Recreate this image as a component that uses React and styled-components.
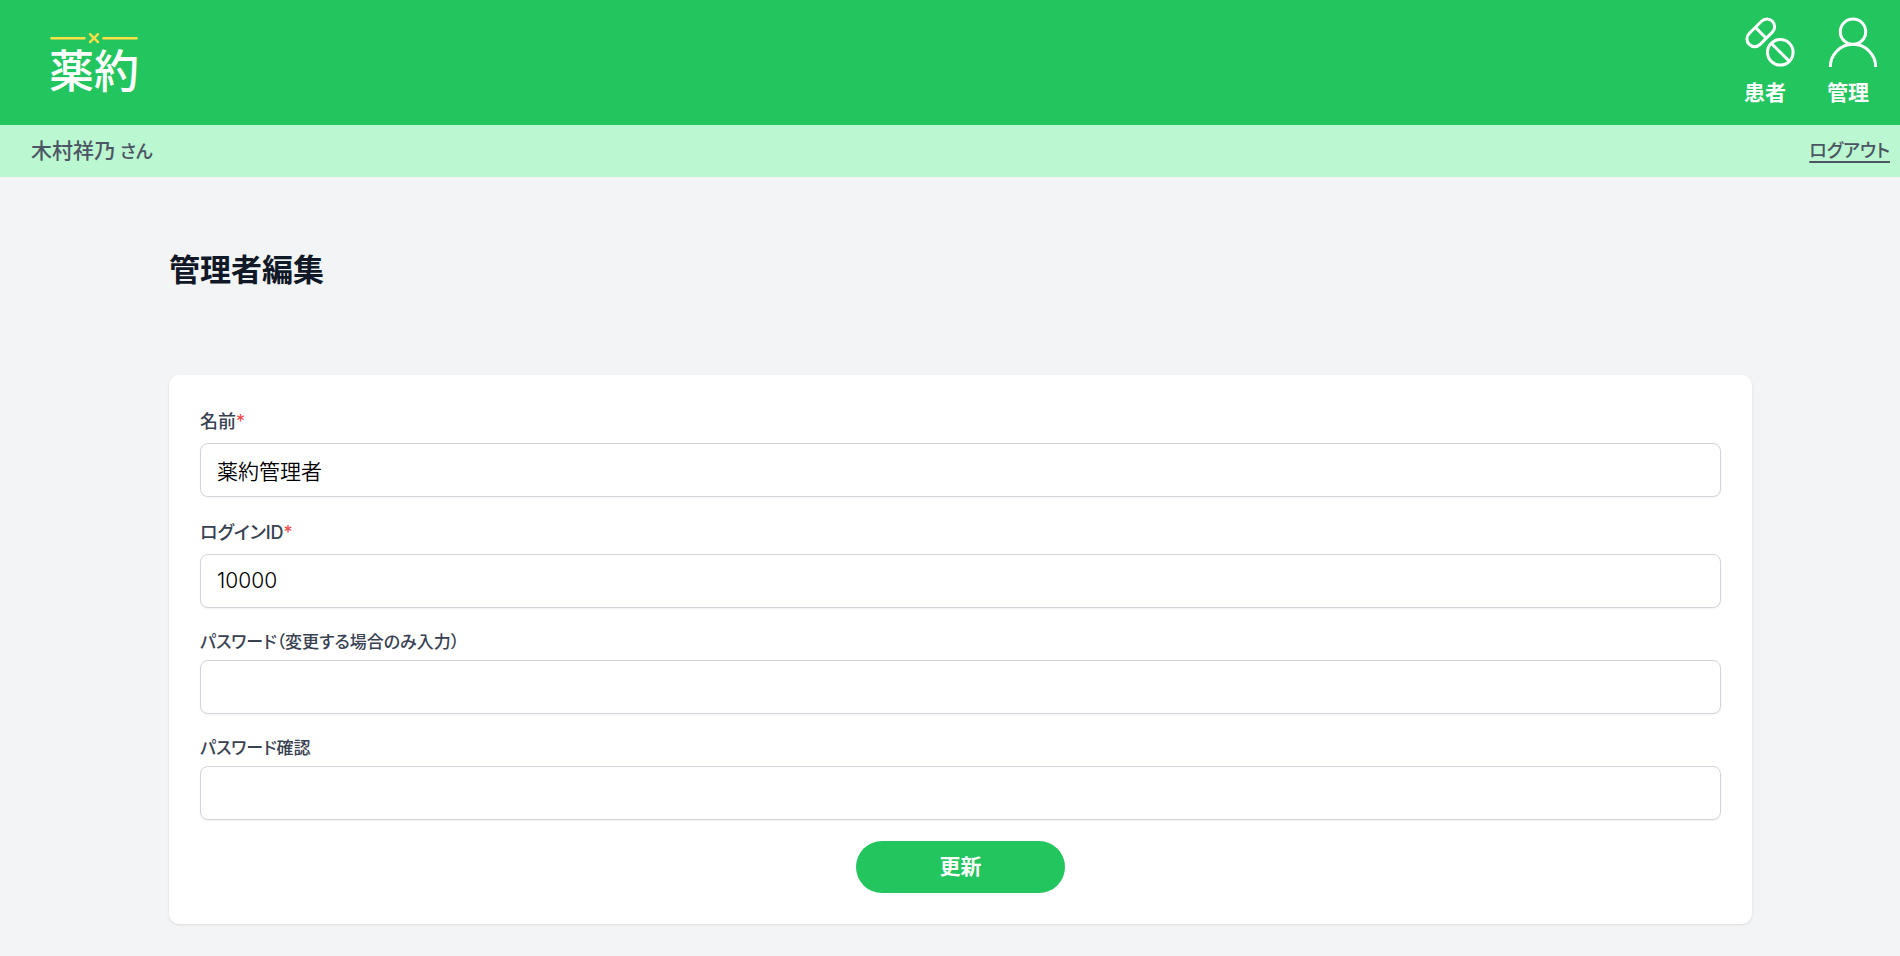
import React from "react";
import styled, { createGlobalStyle } from "styled-components";

const GlobalStyle = createGlobalStyle`
  *, *::before, *::after { box-sizing: border-box; }
  body {
    margin: 0;
    min-height: 100vh;
    background: #f3f4f6;
    font-family: Inter, "Noto Sans CJK JP", sans-serif;
    font-feature-settings: "palt";
  }
`;

const Header = styled.header`
  display: flex;
  justify-content: space-between;
  align-items: flex-start;
  height: 125px;
  padding: 0 21px 0 42px;
  background: #22c55e;
`;

const Logo = styled.a`
  display: flex;
  flex-direction: column;
  align-items: center;
  width: 104px;
  padding-top: 32px;
  color: #fff;
  text-decoration: none;
`;

const LogoText = styled.span`
  font-family: "Noto Sans CJK JP", sans-serif;
  font-feature-settings: normal;
  font-size: 45px;
  font-weight: 500;
  line-height: 50px;
`;

const Nav = styled.nav`
  display: flex;
  gap: 31px;
  padding-top: 16px;
`;

const NavLink = styled.a`
  display: flex;
  flex-direction: column;
  width: 52px;
  color: #fff;
  font-size: 21px;
  font-weight: 700;
  line-height: 30px;
  text-decoration: none;
  white-space: nowrap;
`;

const NavIcon = styled.svg`
  width: 52px;
  height: 52px;
  margin-bottom: 10px;
  fill: none;
  stroke: currentColor;
  stroke-width: 3;
`;

const UserBar = styled.div`
  display: flex;
  justify-content: space-between;
  align-items: center;
  height: 52px;
  padding: 0 10px 0 31px;
  background: #bbf7d0;
  color: #4b5563;
  font-size: 21px;
  font-weight: 500;
  line-height: 32px;
`;

const Honorific = styled.span`
  font-size: 18px;
`;

const Logout = styled.a`
  color: inherit;
  font-size: 18px;
  text-decoration: underline;
  text-decoration-thickness: 2px;
  text-underline-offset: 4px;
`;

const Main = styled.main`
  padding: 72px 148px 32px 169px;
`;

const Title = styled.h1`
  margin: 0 0 84px;
  color: #111827;
  font-size: 31px;
  font-weight: 600;
  line-height: 42px;
`;

const Card = styled.form`
  display: flex;
  flex-direction: column;
  gap: 21px;
  padding: 32px 31px 31px;
  border-radius: 10px;
  background: #fff;
  box-shadow: 0 1px 3px rgba(0, 0, 0, 0.1);
`;

const Field = styled.div`
  display: flex;
  flex-direction: column;
  gap: 5px;
`;

const Label = styled.label`
  color: #374151;
  font-size: ${(p) => (p.$required ? "18px" : "17px")};
  font-weight: 500;
  line-height: ${(p) => (p.$required ? "30px" : "26px")};
  padding-bottom: ${(p) => (p.$required ? "1px" : "0")};
`;

const Mark = styled.span`
  color: #ef4444;
  font-weight: 400;
`;

const Input = styled.input`
  width: 100%;
  height: 54px;
  padding: 0 16px 1px;
  border: 1px solid #d1d5db;
  border-radius: 8px;
  background: #fff;
  box-shadow: 0 1px 2px rgba(0, 0, 0, 0.05);
  color: #000;
  font-family: inherit;
  font-size: 21px;
  font-weight: 350;
`;

const Submit = styled.button`
  align-self: center;
  width: 209px;
  height: 52px;
  padding: 0;
  border: 0;
  border-radius: 26px;
  background: #22c55e;
  color: #fff;
  font-family: inherit;
  font-size: 21px;
  font-weight: 700;
  line-height: 32px;
`;

function FormField({ id, label, required, type = "text", value }) {
  return (
    <Field>
      <Label htmlFor={id} $required={required}>
        {label}
        {required && <Mark>*</Mark>}
      </Label>
      <Input id={id} type={type} defaultValue={value} />
    </Field>
  );
}

export default function App() {
  return (
    <>
      <GlobalStyle />
      <Header>
        <Logo href="#">
          <svg width="88" height="12" viewBox="0 0 88 12" fill="none" stroke="#fde047" strokeWidth="2.4" strokeLinecap="round" aria-hidden="true">
            <path d="M1.4 6.2H34.500M53.400 6.200H86.600" />
            <path d="M40 2.200l8 8M48 2.200l-8 8" />
          </svg>
          <LogoText>薬約</LogoText>
        </Logo>
        <Nav>
          <NavLink href="#">
            <NavIcon viewBox="0 0 52 52" aria-hidden="true">
              <rect x="0.4" y="9.1" width="32.800" height="15.400" rx="7.700" transform="rotate(-45 16.800 16.800)" />
              <path d="M11.400 11.400l10.800 10.800M27.200 27.200l18.200 18.200" />
              <circle cx="36.300" cy="36.300" r="12.800" />
            </NavIcon>
            患者
          </NavLink>
          <NavLink href="#">
            <NavIcon viewBox="0 0 52 52" aria-hidden="true">
              <circle cx="26" cy="15.700" r="12.700" />
              <path d="M3.300 51a22.700 22.700 0 0 1 45.400 0" />
            </NavIcon>
            管理
          </NavLink>
        </Nav>
      </Header>
      <UserBar>
        <span>木村祥乃<Honorific> さん</Honorific></span>
        <Logout href="#">ログアウト</Logout>
      </UserBar>
      <Main>
        <Title>管理者編集</Title>
        <Card onSubmit={(e) => e.preventDefault()}>
          <FormField id="name" label="名前" required value="薬約管理者" />
          <FormField id="login-id" label="ログインID" required value="10000" />
          <FormField id="password" label="パスワード（変更する場合のみ入力）" type="password" />
          <FormField id="password-confirm" label="パスワード確認" type="password" />
          <Submit type="submit">更新</Submit>
        </Card>
      </Main>
    </>
  );
}
